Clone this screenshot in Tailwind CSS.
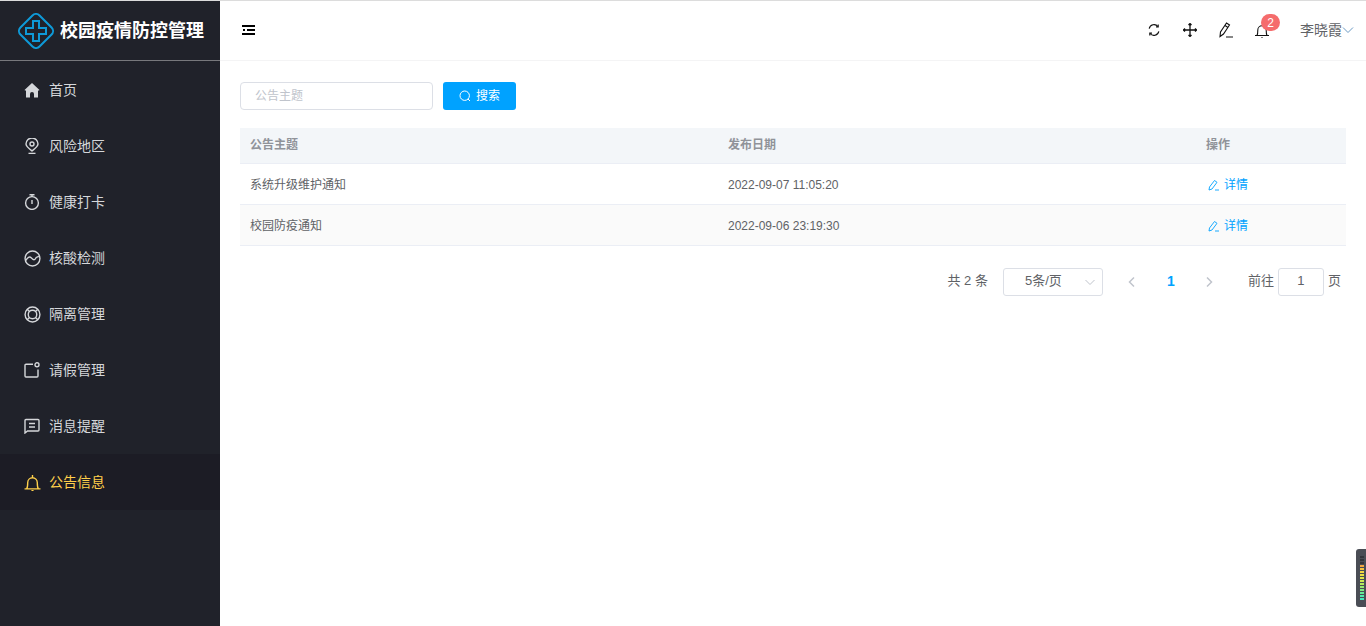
<!DOCTYPE html>
<html lang="zh">
<head>
    <meta charset="UTF-8">
    <title>校园疫情防控管理</title>
    <script src="https://cdn.jsdelivr.net/npm/@tailwindcss/browser@4"></script>
</head>
<body class="h-[626px] overflow-hidden bg-white font-['Liberation_Sans','Noto_Sans_CJK_SC',sans-serif] text-[12px] text-[#606266]">
    <div class="h-px bg-[#dcdcdc]"></div>
    <div class="flex h-[625px]">
        <!-- sidebar -->
        <aside class="w-[220px] shrink-0 bg-[#20222a]">
            <div class="flex h-[60px] items-center border-b border-[#77787c] pl-[18px]">
                <svg class="h-9 w-9 shrink-0" viewBox="0 0 36 36" fill="none" stroke="#0e9ad8" stroke-width="2">
                    <rect x="4.500" y="4.500" width="27" height="27" rx="5" transform="rotate(45 18 18)"/>
                    <path d="M15 8h6v7h7v6h-7v7h-6v-7H8v-6h7z"/>
                </svg>
                <span class="ml-[6px] text-[18px] leading-none font-bold whitespace-nowrap text-white">校园疫情防控管理</span>
            </div>
            <nav class="pt-px text-[14px] text-[#d5d7da]">
                <a class="flex h-[56px] items-center pl-6">
                    <svg class="mr-[9px] h-4 w-4" viewBox="0 0 16 16" fill="#d5d7da"><path d="M8 1 .5 8l.8.800.7-.500V15.500h4v-3.500a2 2 0 0 1 4 0v3.500h4V8.300l.7.500.8-.800z"/></svg>
                    首页
                </a>
                <a class="flex h-[56px] items-center pl-6">
                    <svg class="mr-[9px] h-4 w-4" viewBox="0 0 16 16" fill="none" stroke="#d5d7da" stroke-width="1.400"><path d="M8 13C4.500 10.200 2 8.400 2 6a6 6 0 0 1 12 0C14 8.400 11.500 10.200 8 13z"/><circle cx="8" cy="6" r="2"/><path d="M4.500 15.400h7"/></svg>
                    风险地区
                </a>
                <a class="flex h-[56px] items-center pl-6">
                    <svg class="mr-[9px] h-4 w-4" viewBox="0 0 16 16" fill="none" stroke="#d5d7da" stroke-width="1.400"><circle cx="8" cy="9" r="6.400"/><path d="M5.500.800h5M8 1v2M8 6v4"/></svg>
                    健康打卡
                </a>
                <a class="flex h-[56px] items-center pl-6">
                    <svg class="mr-2 h-[17px] w-[17px]" viewBox="0 0 16 16" fill="none" stroke="#d5d7da" stroke-width="1.300"><circle cx="8" cy="8" r="7"/><path d="M1.500 10C3.500 7 5 5.500 7 7.500S10 10 11.500 7L14 6"/></svg>
                    核酸检测
                </a>
                <a class="flex h-[56px] items-center pl-6">
                    <svg class="mr-2 h-[17px] w-[17px]" viewBox="0 0 16 16" fill="none" stroke="#d5d7da" stroke-width="1.300"><circle cx="8" cy="8" r="7"/><circle cx="8" cy="8" r="4"/><path d="M3 3l2.200 2.200M13 3l-2.200 2.200M3 13l2.200-2.200M13 13l-2.200-2.200"/></svg>
                    隔离管理
                </a>
                <a class="flex h-[56px] items-center pl-6">
                    <svg class="mr-[9px] h-4 w-4" viewBox="0 0 16 16" fill="none" stroke="#d5d7da" stroke-width="1.400"><path d="M9 2.200H2a1 1 0 0 0-1 1V14a1 1 0 0 0 1 1h11a1 1 0 0 0 1-1V7.500"/><circle cx="13" cy="2.800" r="2"/></svg>
                    请假管理
                </a>
                <a class="flex h-[56px] items-center pl-6">
                    <svg class="mr-[9px] h-4 w-4" viewBox="0 0 16 16" fill="none" stroke="#d5d7da" stroke-width="1.400"><path d="M1 15V2.500a1 1 0 0 1 1-1h12a1 1 0 0 1 1 1V12a1 1 0 0 1-1 1H3.500z"/><path d="M5 5.500h6M5 9h6"/></svg>
                    消息提醒
                </a>
                <a class="flex h-[56px] items-center bg-[#1c1c25] pl-6 text-[#ffd04b]">
                    <svg class="mr-2 h-[17px] w-[17px]" viewBox="0 0 16 16" fill="none" stroke="#ffd04b" stroke-width="1.300"><path d="M.500 14h15M2.500 14c1-1.500 1-3 1-6a4.500 4.500 0 0 1 9 0c0 3 0 4.500 1 6M8 1v2M7 15.700h2"/></svg>
                    公告信息
                </a>
            </nav>
        </aside>

        <div class="min-w-0 flex-1">
            <!-- header -->
            <header class="flex h-[60px] items-center border-b border-[#f4f4f5] pr-3 pb-px pl-[22px]">
                <svg class="h-[10px] w-[13px]" viewBox="0 0 13 10" fill="none" stroke="#000" stroke-width="2"><path d="M0 1h13M5 5h8M0 9h13M1 5h2"/></svg>
                <div class="ml-auto flex items-center">
                    <svg class="h-[14px] w-[14px]" viewBox="-1 -1 16 16" fill="none" stroke="#111" stroke-width="1.300"><path d="M1.500 5.500A5.700 5.700 0 0 1 11.500 3M12.500 8.500A5.700 5.700 0 0 1 2.500 11"/><path d="M11.800.800v2.600H9.300M2.200 13.200v-2.600h2.500"/></svg>
                    <svg class="ml-[22px] h-[14px] w-[14px]" viewBox="0 0 14 14" fill="none" stroke="#111" stroke-width="1.300"><path d="M7 0v14M0 7h14M5.500 2 7 .5 8.500 2M5.500 12 7 13.500 8.500 12M2 5.500.5 7 2 8.500M12 5.500 13.500 7 12 8.500"/></svg>
                    <svg class="ml-[22px] h-4 w-[14px]" viewBox="0 0 14 16" fill="none" stroke="#111" stroke-width="1.100"><path d="M1 14.500 1.500 10 7.500 1l3 2L4.500 12zM6 3.500l3 2M7 15h7"/></svg>
                    <div class="relative ml-[22px] h-4 w-[14px]">
                        <svg class="h-4 w-[14px]" viewBox="0 0 14 16" fill="none" stroke="#111" stroke-width="1.100"><path d="M0 13.500h14M2 13.500c.8-1.500.8-3 .8-5.500a4.200 4.200 0 0 1 8.400 0c0 2.500 0 4 .8 5.500M6.500 15.500h1"/></svg>
                        <span class="absolute top-[-8px] left-[6px] flex h-[17px] w-[19px] items-center justify-center rounded-full bg-[#f56c6c] text-[12px] text-white">2</span>
                    </div>
                    <span class="ml-[31px] text-[14px] text-[#606266]">李晓霞</span>
                    <svg class="h-[12px] w-[12px]" viewBox="0 0 12 12" fill="none" stroke="#6b9ac4" stroke-width="1"><path d="M1 3.500 6 8.500 11 3.500"/></svg>
                </div>
            </header>

            <main class="px-5 pt-[21px]">
                <!-- search -->
                <div class="flex items-center">
                    <div class="flex h-7 w-[193px] items-center rounded border border-[#dcdfe6] pl-[14px] text-[12px] text-[#c0c4cc]">公告主题</div>
                    <button class="ml-[10px] flex h-7 w-[73px] items-center justify-center rounded-[3px] bg-[#00a2ff] text-[12px] text-white">
                        <svg class="mr-[5px] h-3 w-3" viewBox="0 0 12 12" fill="none" stroke="#fff" stroke-width="1"><circle cx="5.700" cy="5.700" r="4.700"/><path d="m9 9 2 2"/></svg>
                        搜索
                    </button>
                </div>

                <!-- table -->
                <table class="mt-[18px] w-full table-fixed border-collapse text-left text-[12px]">
                    <thead>
                        <tr class="h-[35px] border-b border-[#ebeef5] bg-[#f3f6f9] text-[#909399]">
                            <th class="w-[478px] pl-[10px] font-bold">公告主题</th>
                            <th class="w-[478px] pl-[10px] font-bold">发布日期</th>
                            <th class="pl-[10px] font-bold">操作</th>
                        </tr>
                    </thead>
                    <tbody>
                        <tr class="h-[41px] border-b border-[#ebeef5]">
                            <td class="pt-[2px] pl-[10px]">系统升级维护通知</td>
                            <td class="pt-[2px] pl-[10px]">2022-09-07 11:05:20</td>
                            <td class="pt-[2px] pl-3 text-[#00a2ff]">
                                <span class="flex items-center">
                                    <svg class="mr-[4px] h-3 w-3" viewBox="0 0 12 12" fill="none" stroke="#00a2ff" stroke-width=".9"><path d="M1 11 1.500 8 6.500 1.500 9 3.300 4 10zM7 11h4"/></svg>
                                    详情
                                </span>
                            </td>
                        </tr>
                        <tr class="h-[41px] border-b border-[#ebeef5] bg-[#fafafa]">
                            <td class="pt-[2px] pl-[10px]">校园防疫通知</td>
                            <td class="pt-[2px] pl-[10px]">2022-09-06 23:19:30</td>
                            <td class="pt-[2px] pl-3 text-[#00a2ff]">
                                <span class="flex items-center">
                                    <svg class="mr-[4px] h-3 w-3" viewBox="0 0 12 12" fill="none" stroke="#00a2ff" stroke-width=".9"><path d="M1 11 1.500 8 6.500 1.500 9 3.300 4 10zM7 11h4"/></svg>
                                    详情
                                </span>
                            </td>
                        </tr>
                    </tbody>
                </table>

                <!-- pagination -->
                <div class="mt-[22px] flex h-7 items-center justify-end pr-[5px] text-[13px]">
                    <span class="-mt-[2px]">共 2 条</span>
                    <div class="ml-[15px] flex h-7 w-[100px] items-center rounded-[3px] border border-[#dcdfe6] pr-[6px] pl-[21px]">
                        <span class="-mt-[2px]">5条/页</span>
                        <svg class="ml-auto h-3 w-3" viewBox="0 0 12 12" fill="none" stroke="#c0c4cc"><path d="M1.500 4 6 8.500 10.500 4"/></svg>
                    </div>
                    <svg class="ml-[23px] h-3 w-3" viewBox="0 0 12 12" fill="none" stroke="#c0c4cc" stroke-width="1.500"><path d="M8 1.500 3.500 6 8 10.500"/></svg>
                    <span class="ml-[26px] w-[14px] text-center text-[14px] font-bold text-[#00a2ff]">1</span>
                    <svg class="ml-[25px] h-3 w-3" viewBox="0 0 12 12" fill="none" stroke="#c0c4cc" stroke-width="1.500"><path d="M4 1.500 8.500 6 4 10.500"/></svg>
                    <span class="-mt-[2px] ml-[33px]">前往</span>
                    <div class="mx-1 flex h-7 w-[46px] items-center justify-center rounded-[3px] border border-[#dcdfe6] pb-[2px]">1</div>
                    <span class="-mt-[2px]">页</span>
                </div>
            </main>
        </div>
    </div>

    <!-- level meter widget at the window edge -->
    <div class="absolute top-[549px] right-0 flex h-[58px] w-[10px] flex-col gap-px rounded-l-[3px] bg-[#4a4d55] pt-[7px] pr-[2px] pl-[4px]">
        <i class="h-[2px] bg-[#33353b]"></i><i class="h-[2px] bg-[#33353b]"></i><i class="h-[2px] bg-[#33353b]"></i>
        <i class="h-[2px] bg-[#f5a742]"></i><i class="h-[2px] bg-[#f5c242]"></i><i class="h-[2px] bg-[#f3d542]"></i><i class="h-[2px] bg-[#eee043]"></i>
        <i class="h-[2px] bg-[#e0e64a]"></i><i class="h-[2px] bg-[#cce852]"></i><i class="h-[2px] bg-[#b4ea5e]"></i><i class="h-[2px] bg-[#98ea6e]"></i>
        <i class="h-[2px] bg-[#7eea82]"></i><i class="h-[2px] bg-[#66ea98]"></i><i class="h-[2px] bg-[#52e9ac]"></i><i class="h-[2px] bg-[#46e8bc]"></i>
    </div>
</body>
</html>
